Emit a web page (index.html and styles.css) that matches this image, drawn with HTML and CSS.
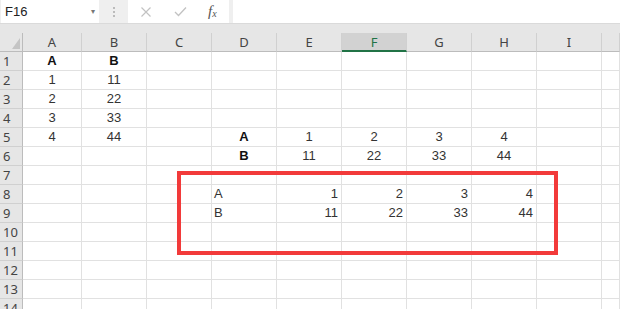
FILE: index.html
```html
<!DOCTYPE html>
<html lang="en">
<head>
    <meta charset="UTF-8">
    <meta name="viewport" content="width=device-width, initial-scale=1.0">
    <title>Sheet1</title>
    <link rel="stylesheet" href="styles.css">
</head>
<body>
    <div class="formula-bar">
        <div class="name-box">
            <span>F16</span>
            <span class="caret">&#9662;</span>
        </div>
        <div class="grip">
            <i></i><i></i><i></i>
        </div>
        <div class="fx-box">
            <svg class="fx-icon" width="12" height="12" viewBox="0 0 12 12">
                <path d="M1.5 1.5 L10.5 10.5 M10.5 1.5 L1.5 10.5" stroke="#c2c2c2" stroke-width="1.2" fill="none"/>
            </svg>
            <svg class="fx-icon" width="13" height="11" viewBox="0 0 13 11">
                <path d="M1 6 L4.5 9.5 L12 1.5" stroke="#c2c2c2" stroke-width="1.3" fill="none"/>
            </svg>
            <span class="fx">f<sub>x</sub></span>
        </div>
        <div class="formula-input"></div>
    </div>
    <div class="band"></div>
    <div class="sheet" id="sheet">
        <div class="mark"></div>
    </div>
    <script>
        let sheet = document.getElementById('sheet');
        let cols = ['', 'A', 'B', 'C', 'D', 'E', 'F', 'G', 'H', 'I', ''];

        // row -> { column: [text, style] }
        let cells = {
            1: { A: ['A', 'bold center'], B: ['B', 'bold center'] },
            2: { A: ['1', 'center'], B: ['11', 'center'] },
            3: { A: ['2', 'center'], B: ['22', 'center'] },
            4: { A: ['3', 'center'], B: ['33', 'center'] },
            5: { A: ['4', 'center'], B: ['44', 'center'], D: ['A', 'bold center'],
                 E: ['1', 'center'], F: ['2', 'center'], G: ['3', 'center'], H: ['4', 'center'] },
            6: { D: ['B', 'bold center'], E: ['11', 'center'], F: ['22', 'center'],
                 G: ['33', 'center'], H: ['44', 'center'] },
            8: { D: ['A', 'left'], E: ['1', 'right'], F: ['2', 'right'], G: ['3', 'right'], H: ['4', 'right'] },
            9: { D: ['B', 'left'], E: ['11', 'right'], F: ['22', 'right'], G: ['33', 'right'], H: ['44', 'right'] }
        };

        function addCell(cls, text) {
            let div = document.createElement('div');
            div.className = cls;
            div.textContent = text;
            sheet.appendChild(div);
        }

        cols.forEach(function (c, i) {
            let cls = 'col-head';
            if (i === 0) cls += ' corner';
            if (c === 'F') cls += ' active';
            addCell(cls, c);
        });

        for (let r = 1; r <= 14; r++) {
            addCell('row-head', r);
            cols.slice(1).forEach(function (c) {
                let data = (cells[r] || {})[c];
                addCell('cell ' + (data ? data[1] : ''), data ? data[0] : '');
            });
        }
    </script>
</body>
</html>
```

FILE: styles.css
```css
body {
    margin: 0;
    width: 620px;
    height: 309px;
    overflow: hidden;
    background-color: #fff;
    font-family: "Liberation Sans", Arial, sans-serif;
    color: #333;
}

/* formula bar */

.formula-bar {
    display: flex;
    height: 23px;
    background-color: #efefef;
}

.name-box {
    display: flex;
    align-items: center;
    justify-content: space-between;
    width: 90px;
    margin-left: 1px;
    padding: 0 4px;
    background-color: #fff;
    font-size: 13px;
    color: #222;
}

.caret {
    font-size: 8px;
    color: #777;
}

.grip {
    display: flex;
    flex-direction: column;
    justify-content: center;
    gap: 2px;
    width: 29px;
    align-items: center;
}

.grip i {
    width: 2px;
    height: 2px;
    background-color: #bbb;
}

.fx-box {
    display: flex;
    align-items: center;
    width: 101px;
    background-color: #fff;
    padding-left: 12px;
    box-sizing: border-box;
    gap: 22px;
}

.fx {
    font-family: "Liberation Serif", serif;
    font-style: italic;
    font-size: 15px;
    color: #555;
    margin-left: -1px;
}

.fx sub {
    font-size: 10px;
    vertical-align: -1px;
}

.formula-input {
    flex: 1;
    margin-left: 4px;
    background-color: #fff;
}

.band {
    height: 10px;
    background-color: #e6e6e6;
    border-top: 1px solid #dadada;
    box-sizing: border-box;
}

/* grid */

.sheet {
    position: relative;
    display: grid;
    grid-template-columns: 23px 59px repeat(8, 65px) 1fr;
    grid-auto-rows: 19px;
    font-size: 13px;
}

.sheet > div {
    box-sizing: border-box;
    display: flex;
    align-items: flex-end;
    padding-bottom: 2px;
    white-space: nowrap;
    overflow: hidden;
}

.col-head {
    justify-content: center;
    align-items: center !important;
    padding-bottom: 0 !important;
    background-color: #e6e6e6;
    border-right: 1px solid #d0d0d0;
    border-bottom: 1px solid #bcbcbc;
    color: #444;
    font-family: "Noto Sans", sans-serif;
}

.col-head.corner {
    position: relative;
    border-right-color: #bcbcbc;
}

.col-head.corner::after {
    content: "";
    position: absolute;
    right: 2px;
    bottom: 2px;
    border-style: solid;
    border-width: 0 0 11px 8px;
    border-color: transparent transparent #c4c4c4 transparent;
}

.col-head.active {
    background-color: #d2d2d2;
    border-bottom: 2px solid #217346;
    color: #217346;
}

.row-head {
    padding-left: 3px;
    background-color: #e6e6e6;
    border-right: 1px solid #bcbcbc;
    border-bottom: 1px solid #d0d0d0;
    color: #444;
    font-family: "Noto Sans", sans-serif;
    font-size: 13px;
    padding-bottom: 0 !important;
    align-items: center !important;
}

.cell {
    border-right: 1px solid #e1e1e1;
    border-bottom: 1px solid #e1e1e1;
}

.center {
    justify-content: center;
}

.right {
    justify-content: flex-end;
    padding-right: 3px;
}

.left {
    padding-left: 2px;
}

.bold {
    font-weight: bold;
    color: #111;
}

/* red outline drawn over the sheet */

.mark {
    position: absolute;
    left: 177px;
    top: 138px;
    width: 381px;
    height: 84px;
    box-sizing: border-box;
    border: 4px solid #f23a3a;
    padding: 0 !important;
}
```
